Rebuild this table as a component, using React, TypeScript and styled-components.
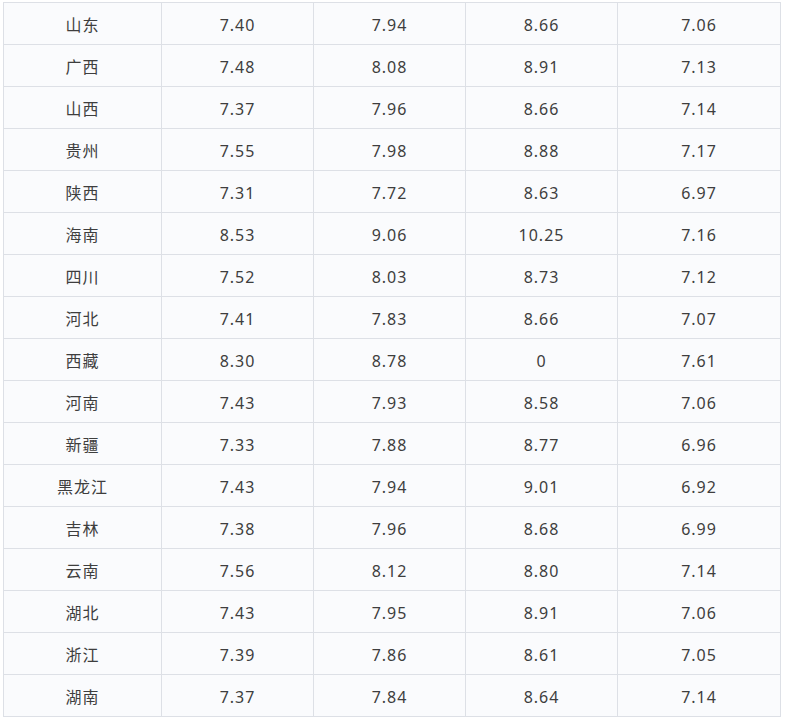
import React from 'react';
import styled, { createGlobalStyle } from 'styled-components';

const GlobalStyle = createGlobalStyle`
  html, body {
    margin: 0;
    padding: 0;
    background: #ffffff;
  }
`;

const Page = styled.div`
  padding: 2px 0 0 3px;
`;

const Table = styled.table`
  border-collapse: collapse;
  table-layout: fixed;
  width: 777px;
  font-family: "Noto Sans", "Noto Sans CJK SC", sans-serif;
  font-size: 16px;
  letter-spacing: 1px;
  color: #3e3e3e;
`;

const Col = styled.col<{ $w: number }>`
  width: ${p => p.$w}px;
`;

const Row = styled.tr`
  height: 42px;
`;

const Cell = styled.td`
  border: 1px solid #dde0e6;
  background: #fafbfd;
  text-align: center;
  vertical-align: middle;
  padding: 3px 0 0 0;
  line-height: 20px;
`;

const rows: [string, string, string, string, string][] = [
  ['山东', '7.40', '7.94', '8.66', '7.06'],
  ['广西', '7.48', '8.08', '8.91', '7.13'],
  ['山西', '7.37', '7.96', '8.66', '7.14'],
  ['贵州', '7.55', '7.98', '8.88', '7.17'],
  ['陕西', '7.31', '7.72', '8.63', '6.97'],
  ['海南', '8.53', '9.06', '10.25', '7.16'],
  ['四川', '7.52', '8.03', '8.73', '7.12'],
  ['河北', '7.41', '7.83', '8.66', '7.07'],
  ['西藏', '8.30', '8.78', '0', '7.61'],
  ['河南', '7.43', '7.93', '8.58', '7.06'],
  ['新疆', '7.33', '7.88', '8.77', '6.96'],
  ['黑龙江', '7.43', '7.94', '9.01', '6.92'],
  ['吉林', '7.38', '7.96', '8.68', '6.99'],
  ['云南', '7.56', '8.12', '8.80', '7.14'],
  ['湖北', '7.43', '7.95', '8.91', '7.06'],
  ['浙江', '7.39', '7.86', '8.61', '7.05'],
  ['湖南', '7.37', '7.84', '8.64', '7.14'],
];

const colWidths = [158, 152, 152, 152, 163];

export default function App() {
  return (
    <>
      <GlobalStyle />
      <Page>
        <Table>
          <colgroup>
            {colWidths.map((w, i) => (
              <Col key={i} $w={w} />
            ))}
          </colgroup>
          <tbody>
            {rows.map(r => (
              <Row key={r[0]}>
                {r.map((v, i) => (
                  <Cell key={i}>{v}</Cell>
                ))}
              </Row>
            ))}
          </tbody>
        </Table>
      </Page>
    </>
  );
}
